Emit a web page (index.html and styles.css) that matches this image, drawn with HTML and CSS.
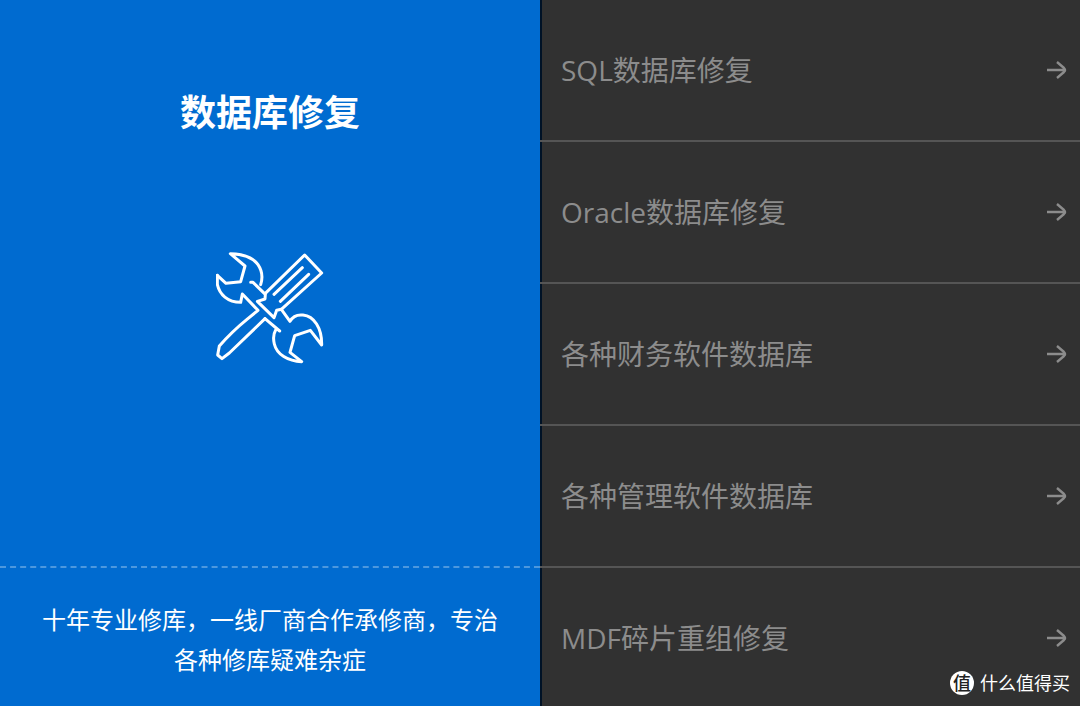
FILE: index.html
```
<!DOCTYPE html>
<html lang="zh-CN">
<head>
    <meta charset="UTF-8">
    <meta name="viewport" content="width=device-width, initial-scale=1.0">
    <title>数据库修复</title>
    <link rel="stylesheet" href="styles.css">
</head>
<body>
    <svg class="sprite" aria-hidden="true">
        <symbol id="arrow" viewBox="0 0 22 20">
            <path d="M1 10H19M11 2L18 8Q20 10 18 12L11 18"/>
        </symbol>
    </svg>

    <main class="service">
        <section class="intro">
            <div class="intro-main">
                <h1>数据库修复</h1>
                <!-- wrench and screwdriver -->
                <svg class="tools" viewBox="48 36 324 336" aria-hidden="true">
                    <path d="M52 106L78 130L122 125L135 78L91 41C130 42 160 54 174 74C187 93 189 112 182 134M152 127H159L196 163L195 177L172 184L222 233L230 211L244 208L270 244C277 231 291 223 309 225C342 228 366 264 365 315L331 271L284 287L270 337L305 365C264 364 230 343 223 312C219 295 221 280 227 270M239 273L195 236"/>
                    <path d="M52 106V133C58 163 83 187 122 187L127 162L174 211L140 239Q98 273 58 318L53 345L66 356L88 339L195 236"/>
                    <path d="M196 160L314 45L365 99L244 208M222 163L307 83M241 184L326 103"/>
                </svg>
            </div>
            <p class="intro-text">十年专业修库，一线厂商合作承修商，专治各种修库疑难杂症</p>
        </section>

        <nav class="links">
            <a href="#sql">SQL数据库修复<svg class="arrow"><use href="#arrow"/></svg></a>
            <a href="#oracle">Oracle数据库修复<svg class="arrow"><use href="#arrow"/></svg></a>
            <a href="#finance">各种财务软件数据库<svg class="arrow"><use href="#arrow"/></svg></a>
            <a href="#management">各种管理软件数据库<svg class="arrow"><use href="#arrow"/></svg></a>
            <a href="#mdf">MDF碎片重组修复<svg class="arrow"><use href="#arrow"/></svg></a>
        </nav>

        <div class="watermark"><span class="badge">值</span>什么值得买</div>
    </main>
</body>
</html>
```

FILE: styles.css
```
* {
    box-sizing: border-box;
}
body {
    margin: 0;
    background: #313131;
    font-family: "Open Sans", "Noto Sans CJK SC", sans-serif;
}
.sprite {
    display: none;
}
.service {
    position: relative;
    display: grid;
    grid-template-columns: 1fr 1fr;
    height: 100vh;
    overflow: hidden;
}

/* Left panel */
.intro {
    background: #006bd0;
    color: #fff;
    text-align: center;
}
.intro-main {
    height: 568px;
    padding-top: 88px;
    border-bottom: 2px dashed #4d98de;
}
h1 {
    margin: 0 0 114px;
    font-size: 36px;
    line-height: 50px;
    font-weight: 700;
}
.tools {
    display: block;
    width: 108px;
    height: 112px;
    margin: 0 auto;
    fill: none;
    stroke: #fff;
    stroke-width: 9;
    stroke-linejoin: round;
    stroke-linecap: round;
}
.intro-text {
    margin: 0;
    padding: 32px 40px;
    font-size: 24px;
    line-height: 40px;
}

/* Right list */
.links a {
    display: flex;
    align-items: center;
    justify-content: space-between;
    height: 142px;
    padding: 0 12px 0 21px;
    border-bottom: 2px solid #555;
    box-shadow: inset 2px 0 #001226;
    color: #8c8c8c;
    font-size: 28px;
    line-height: 40px;
    text-decoration: none;
}
.arrow {
    width: 22px;
    height: 20px;
    fill: none;
    stroke: #8c8c8c;
    stroke-width: 2.4;
}

/* Corner mark */
.watermark {
    position: absolute;
    right: 10px;
    bottom: 10px;
    display: flex;
    align-items: center;
    gap: 6px;
    color: #fff;
    font-size: 18px;
    line-height: 26px;
}
.badge {
    width: 24px;
    height: 24px;
    border-radius: 50%;
    background: #fff;
    color: #222;
    font-weight: 500;
    line-height: 24px;
    text-align: center;
}
```
